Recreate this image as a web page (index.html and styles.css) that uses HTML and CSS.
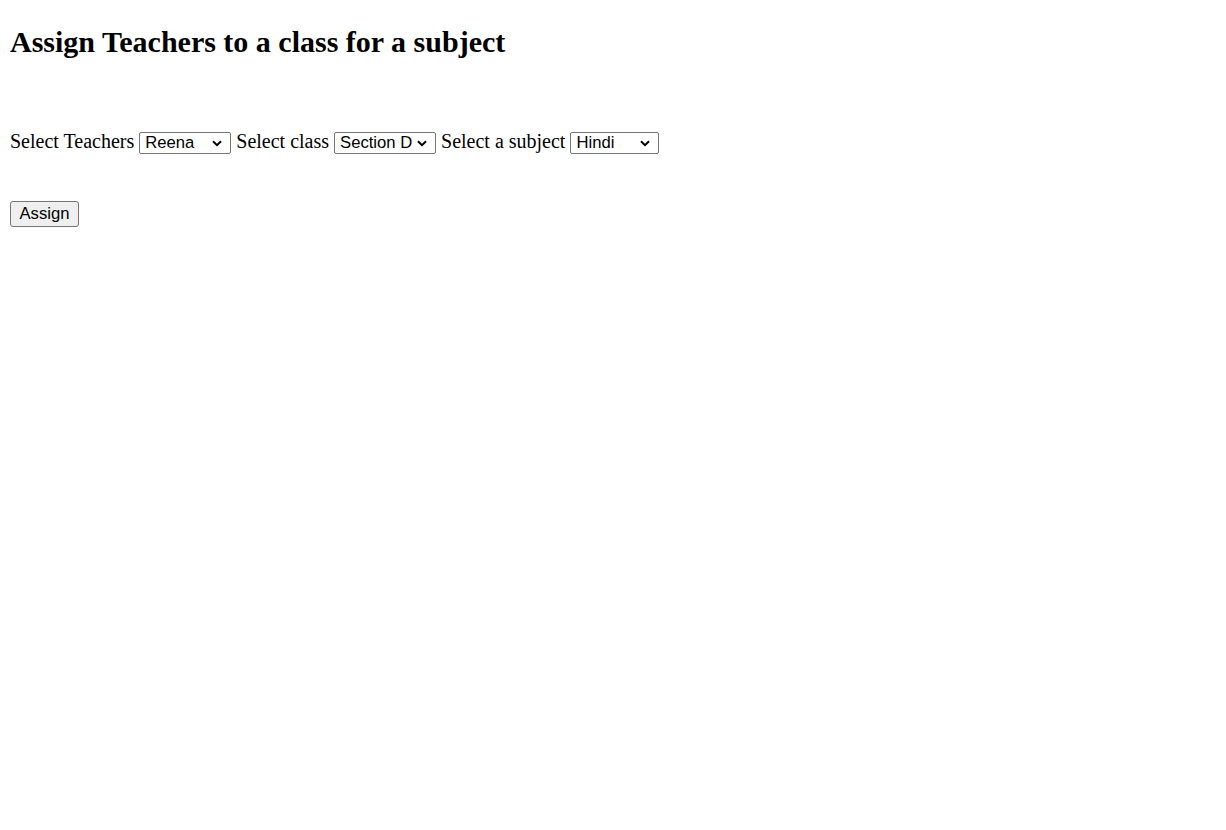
FILE: index.html
```html
<!DOCTYPE html>
<html>
<head>
<meta charset="utf-8">
<title>Assign Teachers</title>
<link rel="stylesheet" href="styles.css">
</head>
<body class="page">
<h2 class="title">Assign Teachers to a class for a subject</h2>
<form class="assign-form">
<br><br>
<label class="field-label">Select Teachers</label>
<select class="sel sel-teacher"><option>Reena</option><option>Teacher 2</option></select>
<label class="field-label">Select class</label>
<select class="sel sel-class"><option>Section D</option><option>Section A</option></select>
<label class="field-label">Select a subject</label>
<select class="sel sel-subject"><option>Hindi</option><option>English</option></select>
<br><br><br>
<button type="button" class="btn">Assign</button>
</form>
</body>
</html>
```
FILE: styles.css
```css
html { background: #fff; }
.page {
  margin: 10px;
  font-family: "Liberation Serif", "Times New Roman", serif;
  font-size: 20px;
  color: #000;
}
.title {
  font-size: 30px;
  font-weight: bold;
  margin: 15px 0 25px;
}
.assign-form { margin: 0; }
.sel {
  -webkit-appearance: none;
  appearance: none;
  font-family: "Liberation Sans", Arial, sans-serif;
  font-size: 16.67px;
  height: 22px;
  box-sizing: border-box;
  color: #000;
  background-color: #fff;
  border: 1px solid #767676;
  border-radius: 2px;
  padding: 0 18px 0 5px;
  background-image: url("data:image/svg+xml,%3Csvg xmlns='http://www.w3.org/2000/svg' width='10' height='7' viewBox='0 0 10 7'%3E%3Cpath d='M1 1.2 L5 5.2 L9 1.2' fill='none' stroke='%23000' stroke-width='2'/%3E%3C/svg%3E");
  background-repeat: no-repeat;
  background-position: right 8px center;
  background-size: 10px 7px;
  line-height: 20px;
}
.sel-teacher { width: 92px; }
.sel-class { width: 102px; padding-right: 20px; }
.sel-subject { width: 89px; }
.btn {
  font-family: "Liberation Sans", Arial, sans-serif;
  font-size: 16.67px;
  width: 69px;
  height: 26px;
  box-sizing: border-box;
  padding: 1px 7px;
  background: #efefef;
  border: 1px solid #767676;
  border-radius: 3px;
  color: #000;
  vertical-align: -1px;
}
```
